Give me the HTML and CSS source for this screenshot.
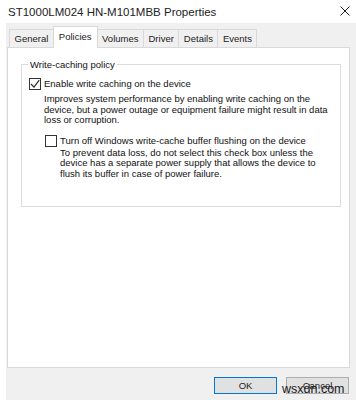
FILE: index.html
```html
<!DOCTYPE html>
<html lang="en">
<head>
  <meta charset="UTF-8">
  <title>ST1000LM024 HN-M101MBB Properties</title>
  <link rel="stylesheet" href="styles.css">
</head>
<body>

  <header class="titlebar">
    <span class="title">ST1000LM024 HN-M101MBB Properties</span>
    <svg class="close" width="10" height="10" viewBox="0 0 10 10">
      <path d="M0.5 0.5 L9.5 9.5 M9.5 0.5 L0.5 9.5" stroke="#222" stroke-width="1" fill="none"/>
    </svg>
  </header>

  <div class="dialog">
    <div class="tabs">
      <div class="tab">General</div>
      <div class="tab active">Policies</div>
      <div class="tab">Volumes</div>
      <div class="tab">Driver</div>
      <div class="tab">Details</div>
      <div class="tab">Events</div>
    </div>

    <div class="panel">
      <div class="group">
        <div class="group-title">Write-caching policy</div>

        <div class="option">
          <span class="check">
            <svg width="10" height="10" viewBox="0 0 10 10">
              <path d="M1 5 L4 8.2 L9.2 1.2" stroke="#222" stroke-width="1.1" fill="none"/>
            </svg>
          </span>
          <span>Enable write caching on the device</span>
        </div>
        <p class="desc">Improves system performance by enabling write caching on the device, but a power outage or equipment failure might result in data loss or corruption.</p>

        <div class="sub">
          <div class="option">
            <span class="check"></span>
            <span>Turn off Windows write-cache buffer flushing on the device</span>
          </div>
          <p class="desc">To prevent data loss, do not select this check box unless the device has a separate power supply that allows the device to flush its buffer in case of power failure.</p>
        </div>
      </div>
    </div>

    <footer class="buttons">
      <button class="btn default">OK</button>
      <button class="btn">Cancel</button>
      <span class="watermark">wsxdn.com</span>
    </footer>
  </div>

</body>
</html>
```

FILE: styles.css
```css
body {
  margin: 0;
  width: 356px;
  height: 400px;
  overflow: hidden;
  background-color: #fff;
  font-family: "Liberation Sans", Arial, sans-serif;
  font-size: 9.5px;
  color: #111;
}

.titlebar {
  height: 23px;
  display: flex;
  align-items: center;
  justify-content: space-between;
  padding: 0 6px 0 8px;
  box-sizing: border-box;
}

.title {
  font-size: 11.5px;
  color: #222;
  margin-top: 1px;
}

.close {
  margin-top: -2px;
}

.dialog {
  margin-left: 6px;
  height: 377px;
  background-color: #f0f0f0;
  display: flex;
  flex-direction: column;
  position: relative;
}

.tabs {
  height: 24px;
  display: flex;
  align-items: flex-end;
  padding-left: 3px;
}

.tab {
  height: 18px;
  line-height: 17px;
  padding: 0 4.5px;
  border: 1px solid #d9d9d9;
  border-bottom: none;
  margin-right: -1px;
  box-sizing: border-box;
  background-color: #f0f0f0;
  color: #222;
}

.tab.active {
  height: 22px;
  line-height: 19px;
  margin-bottom: -1px;
  padding: 0 5px;
  background-color: #fff;
  position: relative;
  z-index: 1;
}

.panel {
  height: 321px;
  margin: 0 6px 0 1px;
  padding: 16px 8px 0 13px;
  box-sizing: border-box;
  background-color: #fff;
  border: 1px solid #d9d9d9;
}

.group {
  border: 1px solid #dcdcdc;
  padding: 0 6px 28px 7px;
  height: 143px;
  box-sizing: border-box;
}

.group-title {
  width: fit-content;
  margin: -6px 0 0 -1px;
  padding: 0 2px;
  line-height: 11px;
  background-color: #fff;
}

.option {
  display: flex;
  align-items: center;
  height: 12px;
  margin-top: 8px;
  line-height: 12px;
}

.check {
  width: 12px;
  height: 12px;
  box-sizing: border-box;
  border: 1px solid #333;
  background-color: #fff;
  margin-right: 3px;
  display: flex;
  align-items: center;
  justify-content: center;
  flex-shrink: 0;
}

.desc {
  margin: 4px 0 0 15px;
  line-height: 10.5px;
}

.sub {
  margin-left: 16px;
  padding-top: 1px;
}

.sub .desc {
  margin-top: 1px;
}

.buttons {
  flex: 1;
  display: flex;
  justify-content: flex-end;
  align-items: flex-start;
  gap: 9px;
  padding: 9px 7px 0 0;
}

.btn {
  width: 63px;
  height: 17px;
  padding: 0;
  font-family: inherit;
  font-size: 9.5px;
  color: #222;
  background-color: #e1e1e1;
  border: 1px solid #adadad;
}

.btn.default {
  border: 1.5px solid #0078d7;
}

.watermark {
  position: absolute;
  left: 276px;
  top: 359px;
  font-size: 12.5px;
  color: #1a1a1a;
}
```
